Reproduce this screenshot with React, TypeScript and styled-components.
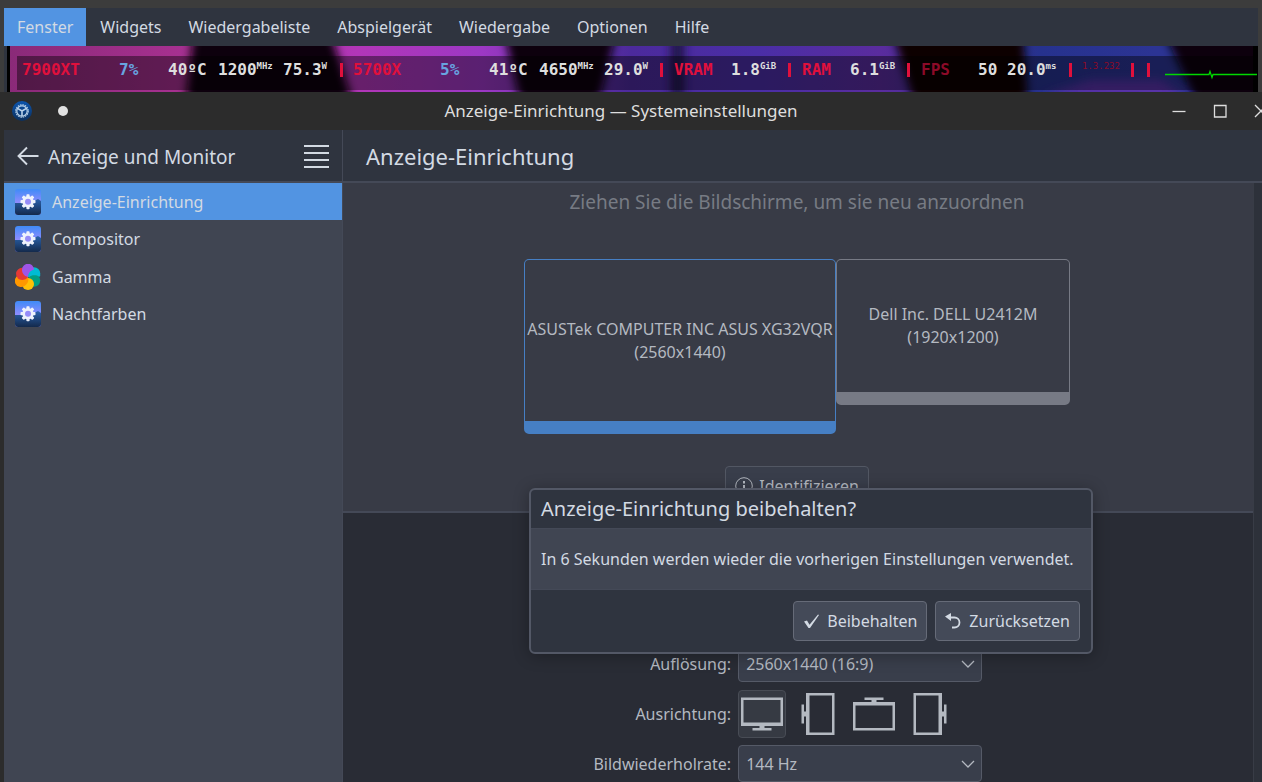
import React from "react";
import styled, { createGlobalStyle } from "styled-components";

const GlobalStyle = createGlobalStyle`
  *, *::before, *::after { box-sizing: border-box; }
  html, body { margin: 0; padding: 0; overflow: hidden; }
  body {
    background: #2c2c2c;
    color: #d3dae3;
    font-family: "Noto Sans", "Open Sans", sans-serif;
    font-size: 16px;
    line-height: 22px;
  }
  button, select { font: inherit; color: inherit; }
  h1, h2, p, ul { margin: 0; padding: 0; font-weight: 400; }
`;

const Desktop = styled.div`
  min-height: 100vh;
  display: flex;
  flex-direction: column;
  padding-top: 8px;
  background: #3c3c3c;
`;

/* ---------- media player behind the window ---------- */

const MenuBar = styled.nav`
  display: flex;
  gap: 1px;
  height: 38px;
  margin: 0 4px;
  background: #2f343f;
`;

const MenuItem = styled.button<{ $active?: boolean }>`
  border: 0;
  padding: 0 13px;
  background: ${(p) => (p.$active ? "#5294e2" : "transparent")};
`;

const VideoStrip = styled.div`
  position: relative;
  height: 46px;
  margin: 0 4px;
  padding: 10px 0 2px 13px;
  background: #000;
  border-left: 3px solid #2f343f;
  overflow: hidden;
`;

const Wallpaper = styled.svg`
  position: absolute;
  inset: 0 5px 0 3px;
  width: calc(100% - 8px);
  height: 100%;
`;

const Hud = styled.div`
  position: relative;
  display: flex;
  height: 34px;
  margin-left: -3px;
  padding-left: 5px;
  background: rgba(0, 0, 0, 0.42);
  font-family: "DejaVu Sans Mono", monospace;
  font-size: 16px;
  font-weight: 700;
  white-space: pre;
`;

const hudColors = {
  label: "#e0103c",
  dim: "#8c0a28",
  load: "#68a4e0",
  value: "#dedede",
};

const HudCell = styled.span<{ $w: number; $tone: keyof typeof hudColors; $small?: boolean }>`
  display: flex;
  flex: none;
  width: ${(p) => p.$w}px;
  color: ${(p) => hudColors[p.$tone]};
  font-size: ${(p) => (p.$small ? 9 : 16)}px;
  font-weight: ${(p) => (p.$small ? 400 : 700)};
  line-height: ${(p) => (p.$small ? 20 : 28)}px;
`;

const Unit = styled.span`
  font-size: 9px;
  line-height: 20px;
`;

const HudBar = styled.span<{ $w: number }>`
  flex: none;
  width: ${(p) => p.$w}px;
  height: 14px;
  margin-top: 7px;
  border-left: 3px solid #e0103c;
`;

/* ---------- settings window ---------- */

const TitleBar = styled.header`
  display: grid;
  grid-template-columns: 1fr auto 1fr;
  align-items: center;
  height: 38px;
  margin-right: -17px;
  padding: 0 8px 0 12px;
  background: #2c2c2c;
  color: #dedede;
`;

const TitleLeft = styled.div`
  display: flex;
  align-items: center;
  gap: 25px;
`;

const WindowTitle = styled.div`
  padding-right: 41px;
  font-size: 17px;
  line-height: 38px;
`;

const WindowButtons = styled.div`
  display: flex;
  justify-content: flex-end;
  gap: 21px;
`;

const IconButton = styled.button`
  display: flex;
  padding: 0;
  border: 0;
  background: none;
`;

const WindowBody = styled.div`
  flex: 1;
  display: flex;
  border-left: 4px solid #2c2c2c;
  background: #2d313a;
`;

const Sidebar = styled.aside`
  flex: none;
  width: 339px;
  border-right: 1px solid #444957;
  background: #404552;
`;

const PaneHeader = styled.div`
  display: flex;
  align-items: center;
  height: 53px;
  border-bottom: 2px solid #444957;
  background: #2f343f;
`;

const SidebarHeader = styled(PaneHeader)`
  gap: 9px;
  padding: 0 13px;
`;

const SidebarTitle = styled.h2`
  flex: 1;
  padding-top: 2px;
  font-size: 19px;
  line-height: 26px;
`;

const NavList = styled.ul`
  display: grid;
  grid-template-rows: repeat(4, 1fr);
  height: 150px;
  list-style: none;
`;

const NavItem = styled.a<{ $active?: boolean }>`
  display: flex;
  align-items: center;
  gap: 11px;
  height: 37px;
  padding-left: 11px;
  color: #d3dae3;
  text-decoration: none;
  background: ${(p) => (p.$active ? "#5294e2" : "transparent")};
`;

const Main = styled.main`
  position: relative;
  flex: 1;
  min-width: 0;
  display: flex;
  flex-direction: column;
`;

const PageTitle = styled.h1`
  padding-left: 23px;
  font-size: 22px;
  line-height: 30px;
`;

const Scroller = styled.div`
  flex: 1;
  display: flex;
  flex-direction: column;
  margin-right: 8px;
  border-right: 1px solid #383c46;
  background: #292c35;
`;

const Arrangement = styled.section`
  display: flex;
  flex-direction: column;
  align-items: center;
  height: 330px;
  padding: 6px 2px 0 0;
  border-bottom: 2px solid #444957;
  background: #383b46;
`;

const Hint = styled.p`
  color: #777b84;
  font-size: 19px;
  line-height: 26px;
`;

const Screens = styled.div`
  display: flex;
  align-items: flex-start;
  height: 207px;
  margin-top: 44px;
`;

const Screen = styled.div<{ $w: number; $h: number; $color: string }>`
  display: flex;
  flex-direction: column;
  align-items: center;
  justify-content: center;
  width: ${(p) => p.$w}px;
  height: ${(p) => p.$h}px;
  border: 1px solid ${(p) => p.$color};
  border-bottom-width: 13px;
  border-radius: 5px;
  color: #b4b9c1;
  line-height: 23px;
  white-space: nowrap;
`;

const Button = styled.button`
  display: flex;
  align-items: center;
  gap: 6px;
  height: 40px;
  padding: 0 9px;
  border: 1px solid #666b78;
  border-radius: 4px;
  background: #444a58;
`;

const IdentifyButton = styled(Button)`
  border-color: #525763;
  background: #393e4b;
  color: #b4b9c1;
`;

const Form = styled.form`
  display: grid;
  grid-template-columns: 3fr 4fr;
  grid-template-rows: 37px 47px 37px;
  column-gap: 7px;
  row-gap: 8px;
  padding: 132px 0 0 2px;
  align-items: center;
  color: #b4b9c1;
`;

const FieldLabel = styled.label`
  text-align: right;
`;

const SelectBox = styled.div`
  position: relative;
  width: 244px;
  height: 37px;
`;

const Select = styled.select`
  appearance: none;
  width: 100%;
  height: 100%;
  padding: 0 30px 0 7px;
  border: 1px solid #555a67;
  border-radius: 4px;
  background: #393e4b;
`;

const SelectArrow = styled.svg`
  position: absolute;
  right: 7px;
  top: 15px;
  pointer-events: none;
`;

const Orientations = styled.div`
  display: flex;
  gap: 8px;
`;

const OrientationButton = styled.button<{ $active?: boolean }>`
  width: 48px;
  height: 48px;
  padding: 0;
  border: 1px solid ${(p) => (p.$active ? "#484c55" : "transparent")};
  border-radius: 4px;
  background: ${(p) => (p.$active ? "#363a43" : "transparent")};
  svg { display: block; margin: -1px; }
`;

const DialogLayer = styled.div`
  position: absolute;
  inset: 358px -17px auto 0;
  display: flex;
  justify-content: center;
`;

const Dialog = styled.div`
  width: 564px;
  border: 2px solid #535866;
  border-radius: 6px;
  background: #2f343f;
  box-shadow: 0 2px 16px rgba(0, 0, 0, 0.3);
`;

const DialogTitle = styled.h2`
  padding: 5px 10px;
  font-size: 20px;
  line-height: 28px;
`;

const DialogText = styled.p`
  padding: 19px 10px;
  border: solid #444957;
  border-width: 1px 0;
  background: #404552;
  white-space: nowrap;
`;

const DialogActions = styled.div`
  display: flex;
  justify-content: flex-end;
  gap: 8px;
  padding: 11px;
`;

/* ---------- icons ---------- */

const GearIcon = ({ id }: { id: string }) => (
  <svg width="26" height="26" viewBox="0 0 26 26" aria-hidden="true">
    <defs>
      <linearGradient id={`${id}-sky`} x1="0" y1="0" x2="0" y2="1">
        <stop offset="0" stopColor="#3f8bf7" />
        <stop offset="0.6" stopColor="#9a8cff" />
      </linearGradient>
      <linearGradient id={`${id}-hill`} x1="0" y1="0" x2="0" y2="1">
        <stop offset="0" stopColor="#2a62ad" />
        <stop offset="1" stopColor="#142a4c" />
      </linearGradient>
      <clipPath id={`${id}-clip`}>
        <rect width="26" height="26" rx="3" />
      </clipPath>
    </defs>
    <g clipPath={`url(#${id}-clip)`}>
      <rect width="26" height="26" fill={`url(#${id}-sky)`} />
      <path d="M0 14h15l8-4 3 2v14H0z" fill={`url(#${id}-hill)`} />
    </g>
    <g fill="#eef2fc">
      {[0, 45, 90, 135].map((a) => (
        <rect key={a} x="11.4" y="5.2" width="3.2" height="15" rx="0.8" transform={`rotate(${a} 13 12.7)`} />
      ))}
      <circle cx="13" cy="12.7" r="5.6" />
    </g>
    <circle cx="13" cy="12.7" r="3" fill="#968cf8" />
  </svg>
);

const GammaIcon = () => (
  <svg width="26" height="26" viewBox="0 0 26 26" aria-hidden="true">
    <circle cx="19" cy="9.5" r="6.2" fill="#00bcd4" />
    <circle cx="19" cy="16.5" r="6.2" fill="#009e83" />
    <circle cx="13" cy="20" r="6" fill="#ffc107" />
    <path d="M13 13c1 3 0 7-3.500 9A6.200 6.200 0 1 1 4 11z" fill="#ff9800" />
    <path d="M13 13c-2 3-7 4-10 1.500A6.200 6.200 0 1 1 12 6z" fill="#e53935" />
    <path d="M13 13c-4-1-6-4-6-7a6 6 0 0 1 12-.500c0 3.500-2 6.500-6 7.500z" fill="#9f55e8" />
    <path d="M13 13c0-4.500 3.500-7.500 7.500-7.500a5.500 5.500 0 0 1 4.500 7c-3-1.500-8-2-12 .500z" fill="#00bcd4" />
  </svg>
);

const AppIcon = () => (
  <svg width="20" height="20" viewBox="0 0 20 20" aria-hidden="true">
    <defs>
      <linearGradient id="app-disc" x1="0" y1="0" x2="0" y2="1">
        <stop offset="0" stopColor="#0c55ae" />
        <stop offset="1" stopColor="#0b2f5c" />
      </linearGradient>
    </defs>
    <circle cx="10" cy="10" r="10" fill="url(#app-disc)" />
    <circle cx="10" cy="10" r="6.2" fill="none" stroke="#b9d2ea" strokeWidth="1.2" strokeDasharray="1.6 0.8" />
    <circle cx="10" cy="10" r="5.2" fill="none" stroke="#b9d2ea" strokeWidth="1.2" />
    <path d="M10 10v5M10 10L5.500 7.400M10 10l4.500-2.600" stroke="#b9d2ea" strokeWidth="1.6" />
  </svg>
);

const ScreenIcon = ({ turn }: { turn: number }) => (
  <svg width="48" height="48" viewBox="0 0 48 48" aria-hidden="true">
    <g transform={`rotate(${turn} 24 24)`} fill="#b4b9c1">
      <path fillRule="evenodd" d="M3 7.500h42V36H3zM5.500 10v22.500h37V10z" />
      <path d="M21.500 36h5v2h7v2.500h-19V38h7z" />
    </g>
  </svg>
);

const Chevron = () => (
  <SelectArrow width="14" height="9" viewBox="0 0 14 9" aria-hidden="true">
    <path d="M1 1l6 6 6-6" fill="none" stroke="#b4b9c1" strokeWidth="1.3" />
  </SelectArrow>
);

const WallpaperArt = () => (
  <Wallpaper viewBox="0 0 1242 46" preserveAspectRatio="none" aria-hidden="true">
    <defs>
      <linearGradient id="wall">
        <stop offset="0" stopColor="#8a2a78" />
        <stop offset="0.13" stopColor="#a5308f" />
        <stop offset="0.28" stopColor="#b236b8" />
        <stop offset="0.38" stopColor="#9c38c4" />
        <stop offset="0.5" stopColor="#4c2a9c" />
        <stop offset="0.6" stopColor="#4a2ea6" />
        <stop offset="0.7" stopColor="#5a2c9e" />
        <stop offset="0.83" stopColor="#26328e" />
        <stop offset="0.92" stopColor="#2c3494" />
      </linearGradient>
      <filter id="soft" x="-10%" y="-50%" width="120%" height="200%">
        <feGaussianBlur stdDeviation="5" />
      </filter>
    </defs>
    <rect width="1242" height="46" fill="url(#wall)" />
    <g filter="url(#soft)">
      <path d="M184-20L174 66H346L318-20z" fill="#0a0407" />
      <path d="M492-20L512 66H586L608-20z" fill="#0c0409" />
      <path d="M660-20h14v86h-14z" fill="#24124c" />
      <path d="M880-20L906 66H1018L1012-20z" fill="#0b0306" />
      <path d="M1150-20L1190 66H1260V-20z" fill="#0a0408" />
      <path d="M1030 50L1080 34h70l30 20z" fill="#5a30a8" />
    </g>
  </Wallpaper>
);

/* ---------- data ---------- */

const menu = ["Fenster", "Widgets", "Wiedergabeliste", "Abspielgerät", "Wiedergabe", "Optionen", "Hilfe"];

type HudEntry = { w: number; text?: string; unit?: string; tone?: keyof typeof hudColors; small?: boolean };

const hud: HudEntry[] = [
  { w: 97, text: "7900XT", tone: "label" },
  { w: 49, text: "7%", tone: "load" },
  { w: 50, text: "40ºC" },
  { w: 65, text: "1200", unit: "MHz" },
  { w: 57, text: "75.3", unit: "W" },
  { w: 13 },
  { w: 87, text: "5700X", tone: "label" },
  { w: 49, text: "5%", tone: "load" },
  { w: 50, text: "41ºC" },
  { w: 65, text: "4650", unit: "MHz" },
  { w: 56, text: "29.0", unit: "W" },
  { w: 14 },
  { w: 57, text: "VRAM", tone: "label" },
  { w: 57, text: "1.8", unit: "GiB" },
  { w: 14 },
  { w: 48, text: "RAM", tone: "label" },
  { w: 57, text: "6.1", unit: "GiB" },
  { w: 14 },
  { w: 57, text: "FPS", tone: "dim" },
  { w: 29, text: "50" },
  { w: 62, text: "20.0", unit: "ms" },
  { w: 13 },
  { w: 49, text: "1.3.232", tone: "dim", small: true },
  { w: 16 },
  { w: 18 },
];

const navigation = ["Anzeige-Einrichtung", "Compositor", "Gamma", "Nachtfarben"];

const orientations = [
  { label: "Normal", turn: 0 },
  { label: "90° im Uhrzeigersinn", turn: 90 },
  { label: "Kopfüber", turn: 180 },
  { label: "90° gegen den Uhrzeigersinn", turn: 270 },
];

export default function App() {
  return (
    <>
      <GlobalStyle />
      <Desktop>
        <MenuBar>
          {menu.map((m, i) => (
            <MenuItem key={m} type="button" $active={i === 0}>{m}</MenuItem>
          ))}
        </MenuBar>

        <VideoStrip>
          <WallpaperArt />
          <Hud>
            {hud.map((c, i) =>
              c.text ? (
                <HudCell key={i} $w={c.w} $tone={c.tone ?? "value"} $small={c.small}>
                  {c.text}
                  {c.unit && <Unit>{c.unit}</Unit>}
                </HudCell>
              ) : (
                <HudBar key={i} $w={c.w} />
              )
            )}
            <svg width="92" height="34" viewBox="0 0 92 34" aria-hidden="true">
              <path d="M0 18.500h44l1-3 2 6 1-3h44" fill="none" stroke="#00d800" strokeWidth="1.3" />
            </svg>
          </Hud>
        </VideoStrip>

        <TitleBar>
          <TitleLeft>
            <AppIcon />
            <svg width="12" height="12" viewBox="0 0 12 12" aria-hidden="true">
              <circle cx="6" cy="6" r="5" fill="#e2e2e2" />
            </svg>
          </TitleLeft>
          <WindowTitle>Anzeige-Einrichtung — Systemeinstellungen</WindowTitle>
          <WindowButtons>
            <IconButton type="button" aria-label="Minimieren">
              <svg width="20" height="20" viewBox="0 0 20 20"><path d="M3.500 10.500h13" stroke="#dedede" strokeWidth="1.3" /></svg>
            </IconButton>
            <IconButton type="button" aria-label="Maximieren">
              <svg width="20" height="20" viewBox="0 0 20 20"><path d="M4.500 4.500h11.500v11.500H4.500z" fill="none" stroke="#dedede" strokeWidth="1.3" /></svg>
            </IconButton>
            <IconButton type="button" aria-label="Schließen">
              <svg width="20" height="20" viewBox="0 0 20 20"><path d="M4 4l12 12M16 4L4 16" stroke="#dedede" strokeWidth="1.3" /></svg>
            </IconButton>
          </WindowButtons>
        </TitleBar>

        <WindowBody>
          <Sidebar>
            <SidebarHeader>
              <IconButton type="button" aria-label="Zurück">
                <svg width="22" height="22" viewBox="0 0 22 22">
                  <path d="M10 2.500L1.500 11l8.500 8.500M1.500 11h20" fill="none" stroke="#d3dae3" strokeWidth="1.9" />
                </svg>
              </IconButton>
              <SidebarTitle>Anzeige und Monitor</SidebarTitle>
              <IconButton type="button" aria-label="Menü">
                <svg width="26" height="26" viewBox="0 0 26 26">
                  <path d="M1 3h25M1 10h25M1 17h25M1 24h25" stroke="#d3dae3" strokeWidth="2" />
                </svg>
              </IconButton>
            </SidebarHeader>
            <NavList>
              {navigation.map((n, i) => (
                <li key={n}>
                  <NavItem href="#" $active={i === 0}>
                    {n === "Gamma" ? <GammaIcon /> : <GearIcon id={`nav${i}`} />}
                    {n}
                  </NavItem>
                </li>
              ))}
            </NavList>
          </Sidebar>

          <Main>
            <PaneHeader>
              <PageTitle>Anzeige-Einrichtung</PageTitle>
            </PaneHeader>
            <Scroller>
              <Arrangement>
                <Hint>Ziehen Sie die Bildschirme, um sie neu anzuordnen</Hint>
                <Screens>
                  <Screen $w={312} $h={175} $color="#467fc4">
                    <span>ASUSTek COMPUTER INC ASUS XG32VQR</span>
                    <span>(2560x1440)</span>
                  </Screen>
                  <Screen $w={234} $h={146} $color="#777a85">
                    <span>Dell Inc. DELL U2412M</span>
                    <span>(1920x1200)</span>
                  </Screen>
                </Screens>
                <IdentifyButton type="button">
                  <svg width="18" height="18" viewBox="0 0 18 18" aria-hidden="true">
                    <circle cx="9" cy="9" r="8.3" fill="none" stroke="#b4b9c1" />
                    <path d="M8 4h2v2.500H8zM8 8h2v6H8z" fill="#b4b9c1" />
                  </svg>
                  Identifizieren
                </IdentifyButton>
              </Arrangement>

              <Form>
                <FieldLabel htmlFor="resolution">Auflösung:</FieldLabel>
                <SelectBox>
                  <Select id="resolution"><option>2560x1440 (16:9)</option></Select>
                  <Chevron />
                </SelectBox>
                <FieldLabel as="span" id="orientation">Ausrichtung:</FieldLabel>
                <Orientations role="group" aria-labelledby="orientation">
                  {orientations.map((o, i) => (
                    <OrientationButton key={o.turn} type="button" aria-label={o.label} aria-pressed={i === 0} $active={i === 0}>
                      <ScreenIcon turn={o.turn} />
                    </OrientationButton>
                  ))}
                </Orientations>
                <FieldLabel htmlFor="refresh">Bildwiederholrate:</FieldLabel>
                <SelectBox>
                  <Select id="refresh"><option>144 Hz</option></Select>
                  <Chevron />
                </SelectBox>
              </Form>
            </Scroller>

            <DialogLayer>
              <Dialog role="dialog" aria-labelledby="keep-title">
                <DialogTitle id="keep-title">Anzeige-Einrichtung beibehalten?</DialogTitle>
                <DialogText>In 6 Sekunden werden wieder die vorherigen Einstellungen verwendet.</DialogText>
                <DialogActions>
                  <Button type="button">
                    <svg width="18" height="18" viewBox="0 0 18 18" aria-hidden="true">
                      <path d="M1 9.500l3-1 2.500 4.200L15 2.500l1 .500L7 16H5.500z" fill="#d3dae3" />
                    </svg>
                    Beibehalten
                  </Button>
                  <Button type="button">
                    <svg width="18" height="18" viewBox="0 0 18 18" aria-hidden="true">
                      <path d="M5 5.500h4.500a5 5 0 0 1 0 10H7" fill="none" stroke="#d3dae3" strokeWidth="1.8" />
                      <path d="M0 4.500l6-3.500v8z" fill="#d3dae3" />
                    </svg>
                    Zurücksetzen
                  </Button>
                </DialogActions>
              </Dialog>
            </DialogLayer>
          </Main>
        </WindowBody>
      </Desktop>
    </>
  );
}
